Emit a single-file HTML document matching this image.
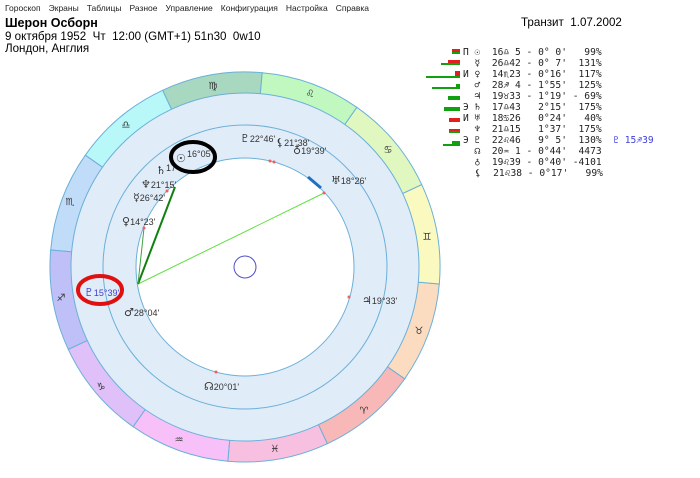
<!DOCTYPE html>
<html><head><meta charset="utf-8"><style>
body{margin:0;width:700px;height:478px;background:#fff;overflow:hidden;font-family:"Liberation Sans","DejaVu Sans",sans-serif;position:relative}
.menu{position:absolute;top:3px;left:5px;font-size:8.5px;color:#222;word-spacing:0}
.menu span{margin-right:8px}
.t{position:absolute;left:5px;font-size:11.6px;color:#000}
pre{position:absolute;margin:0;font-family:"DejaVu Sans Mono","Liberation Mono",monospace;font-size:9.6px;line-height:11px;color:#222}
svg{position:absolute;left:0;top:0}
.g{font-family:"DejaVu Sans";font-size:11px}
</style></head><body>
<div class="menu"><span>Гороскоп</span><span>Экраны</span><span>Таблицы</span><span>Разное</span><span>Управление</span><span>Конфигурация</span><span>Настройка</span><span>Справка</span></div>
<div class="t" style="top:16px;font-weight:bold;font-size:12.5px">Шерон Осборн</div>
<div class="t" style="top:30px">9 октября 1952&nbsp; Чт&nbsp; 12:00 (GMT+1) 51n30&nbsp; 0w10</div>
<div class="t" style="top:42px">Лондон, Англия</div>
<div class="t" style="top:16px;left:521px">Транзит&nbsp; 1.07.2002</div>
<svg width="700" height="478" viewBox="0 0 700 478">
<g stroke="#6ab0d8" stroke-width="1">
<path d="M245,267 L262.2,72.7 A195,195 0 0 0 162.6,90.3Z" fill="#a8d8bf"/>
<path d="M245,267 L162.6,90.3 A195,195 0 0 0 85.3,155.2Z" fill="#b8f8f8"/>
<path d="M245,267 L85.3,155.2 A195,195 0 0 0 50.7,250Z" fill="#c0dcf8"/>
<path d="M245,267 L50.7,250 A195,195 0 0 0 68.3,349.4Z" fill="#c0c0f8"/>
<path d="M245,267 L68.3,349.4 A195,195 0 0 0 133.2,426.7Z" fill="#e0c0f8"/>
<path d="M245,267 L133.2,426.7 A195,195 0 0 0 227.9,461.2Z" fill="#f8c0f8"/>
<path d="M245,267 L227.9,461.2 A195,195 0 0 0 327.4,443.7Z" fill="#f8c0e0"/>
<path d="M245,267 L327.4,443.7 A195,195 0 0 0 404.7,378.8Z" fill="#f8b8b8"/>
<path d="M245,267 L404.7,378.8 A195,195 0 0 0 439.3,284Z" fill="#fbdcc0"/>
<path d="M245,267 L439.3,284 A195,195 0 0 0 421.7,184.6Z" fill="#fafac0"/>
<path d="M245,267 L421.7,184.6 A195,195 0 0 0 356.8,107.3Z" fill="#e0f8c0"/>
<path d="M245,267 L356.8,107.3 A195,195 0 0 0 262.2,72.7Z" fill="#c0f8c0"/>
<circle cx="245" cy="267" r="174" fill="#e0ecf8"/>
<circle cx="245" cy="267" r="142" fill="#e0ecf8"/>
<circle cx="245" cy="267" r="109" fill="#fff"/>
</g>
<g font-family="DejaVu Sans" font-size="10" fill="#333" text-anchor="middle">
<text x="213" y="89">♍</text><text x="310" y="97">♌</text><text x="388" y="153">♋</text>
<text x="427" y="240">♊</text><text x="419" y="334">♉</text><text x="364" y="414">♈</text>
<text x="275" y="452">♓</text><text x="179" y="443">♒</text><text x="101" y="390">♑</text>
<text x="61" y="301">♐</text><text x="70" y="205">♏</text><text x="126" y="128">♎</text>
</g>
<circle cx="245" cy="267" r="11" fill="none" stroke="#5050c8"/>
<line x1="138" y1="284" x2="324" y2="193" stroke="#60e040"/>
<line x1="138" y1="284" x2="175" y2="187" stroke="#108010" stroke-width="2"/>
<line x1="138" y1="284" x2="144" y2="228" stroke="#40a040"/>
<line x1="308" y1="177" x2="321" y2="188" stroke="#2070c0" stroke-width="3"/>
<g fill="#f06060"><circle cx="324" cy="193" r="1.5"/><circle cx="270" cy="161" r="1.5"/><circle cx="274" cy="162" r="1.5"/><circle cx="349" cy="297" r="1.5"/><circle cx="216" cy="372" r="1.5"/><circle cx="144" cy="228" r="1.5"/><circle cx="167" cy="191" r="1.5"/></g>
<g font-family="Liberation Sans,DejaVu Sans" font-size="9" fill="#333">
<text x="176" y="162" class="g">☉</text><text x="187" y="157">16°05'</text>
<text x="156" y="174" class="g">♄</text><text x="166" y="171">17</text>
<text x="141" y="188"><tspan class="g">♆</tspan>21°15'</text>
<text x="133" y="201"><tspan class="g">☿</tspan>26°42'</text>
<text x="122" y="225"><tspan class="g">♀</tspan>14°23'</text>
<text x="124" y="316"><tspan class="g">♂</tspan>28°04'</text>
<text x="204" y="390"><tspan class="g">☊</tspan>20°01'</text>
<text x="362" y="304"><tspan class="g">♃</tspan>19°33'</text>
<text x="331" y="184"><tspan class="g">♅</tspan>18°26'</text>
<text x="293" y="154"><tspan class="g">♁</tspan>19°39'</text>
<text x="276" y="146"><tspan class="g">⚸</tspan>21°38'</text>
<text x="240" y="142"><tspan class="g">♇</tspan>22°46'</text>
<text x="84" y="296" fill="#4040d0"><tspan class="g">♇</tspan>15°39'</text>
</g>
<ellipse cx="193" cy="157" rx="22" ry="15" fill="none" stroke="#000" stroke-width="4"/>
<ellipse cx="100" cy="290" rx="22" ry="14" fill="none" stroke="#e01010" stroke-width="4"/>
<g>
<rect x="452" y="49" width="8" height="3" fill="#e02020"/><rect x="452" y="52" width="8" height="2" fill="#10a010"/>
<rect x="448" y="60" width="12" height="3" fill="#e02020"/><rect x="441" y="63" width="19" height="2" fill="#10a010"/>
<rect x="455" y="71" width="5" height="5" fill="#e02020"/><rect x="426" y="76" width="34" height="2" fill="#10a010"/>
<rect x="432" y="87" width="28" height="2" fill="#10a010"/><rect x="456" y="84" width="4" height="3" fill="#10a010"/>
<rect x="448" y="96" width="12" height="4" fill="#10a010"/>
<rect x="444" y="107" width="16" height="4" fill="#10a010"/>
<rect x="449" y="118" width="11" height="4" fill="#e02020"/>
<rect x="449" y="129" width="11" height="2" fill="#e02020"/><rect x="449" y="131" width="11" height="2" fill="#10a010"/>
<rect x="443" y="144" width="17" height="2" fill="#10a010"/><rect x="452" y="141" width="8" height="3" fill="#10a010"/>
</g>
</svg>
<pre style="left:463px;top:47px">П ☉  16♎ 5 - 0° 0'   99%
  ☿  26♎42 - 0° 7'  131%
И ♀  14♏23 - 0°16'  117%
  ♂  28♐ 4 - 1°55'  125%
  ♃  19♉33 - 1°19' - 69%
Э ♄  17♎43   2°15'  175%
И ♅  18♋26   0°24'   40%
  ♆  21♎15   1°37'  175%
Э ♇  22♌46   9° 5'  130%  <span style="color:#4040e0">♇ 15♐39</span>
  ☊  20♒ 1 - 0°44'  4473
  ♁  19♌39 - 0°40' -4101
  ⚸  21♌38 - 0°17'   99%</pre>
</body></html>
